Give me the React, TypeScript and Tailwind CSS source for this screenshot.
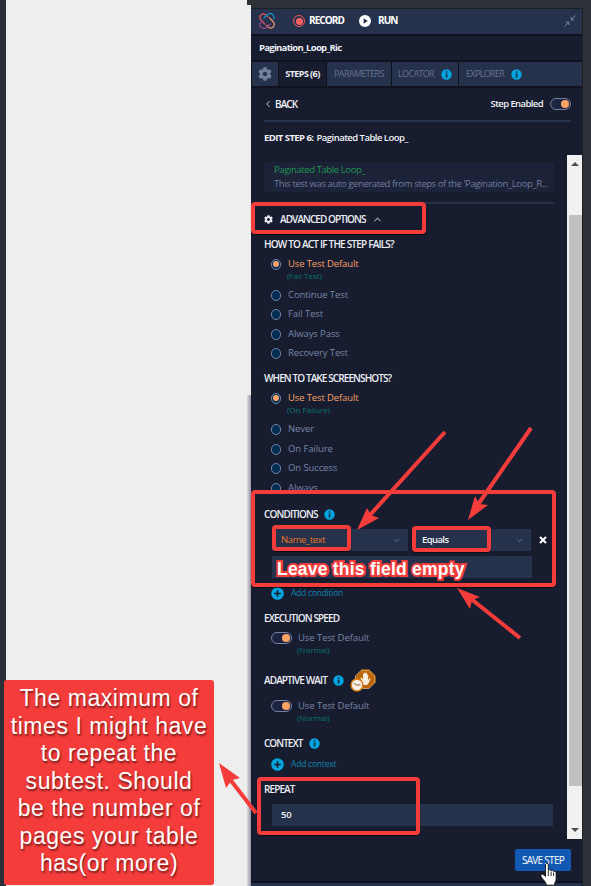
import React from "react";
import { ChevronDown, ChevronLeft, ChevronUp } from "lucide-react";
import { FaCog } from "react-icons/fa";

function Info({ className = "" }: { className?: string }) {
  return (
    <svg className={"shrink-0 " + className} width="11" height="11" viewBox="0 0 11 11">
      <circle cx="5.5" cy="5.5" r="5.2" fill="#00a5df" />
      <rect x="4.7" y="4.6" width="1.7" height="4" fill="#15314f" />
      <rect x="4.7" y="2.2" width="1.7" height="1.5" fill="#15314f" />
    </svg>
  );
}

function Plus() {
  return (
    <svg className="shrink-0" width="13" height="13" viewBox="0 0 13 13">
      <circle cx="6.5" cy="6.5" r="6.3" fill="#00a5df" />
      <path d="M6.5 3.2v6.6M3.2 6.5h6.6" stroke="#161c2e" strokeWidth="1.6" />
    </svg>
  );
}

function Heading({ children, className = "" }: { children: React.ReactNode; className?: string }) {
  return (
    <div className={"ml-[13px] flex h-[21px] items-center text-[10px] font-semibold text-[#eceef4] " + className}>
      {children}
    </div>
  );
}

function Radio({ label, on = false, className = "" }: { label: string; on?: boolean; className?: string }) {
  return (
    <div
      className={
        "ml-5 flex items-center text-[9.5px] " + (on ? "h-[18px] text-[#f7a066] " : "text-[#7885a6] ") + className
      }
    >
      <span className="mr-[7px] flex h-[11px] w-[10px] shrink-0 items-center justify-center rounded-full border border-[#6f84a8] bg-[#022c50]">
        {on && <span className="size-[6px] shrink-0 rounded-full bg-[#ffa468]" />}
      </span>
      <span className={on ? "pt-px tracking-[-0.13px]" : "tracking-[-0.1px]"}>{label}</span>
    </div>
  );
}

function Sub({ children, className = "" }: { children: React.ReactNode; className?: string }) {
  return (
    <div className={"flex h-[9px] items-center pb-[3px] text-[8px] leading-none text-[#0a7372] " + className}>
      {children}
    </div>
  );
}

function Toggle() {
  return (
    <span className="flex h-[12px] w-[21px] shrink-0 items-center justify-end rounded-full border border-[#7480a3] bg-[#1c2440] pr-px">
      <span className="size-[8px] rounded-full bg-[#ffa468]" />
    </span>
  );
}

function DefaultToggle({ className = "" }: { className?: string }) {
  return (
    <div className={className}>
      <div className="ml-5 flex h-[18px] items-center gap-[6px] text-[9.5px] text-[#7885a6]">
        <Toggle />
        <span className="tracking-[-0.07px]">Use Test Default</span>
      </div>
      <Sub className="ml-[46px]">(Normal)</Sub>
    </div>
  );
}

function Logo() {
  return (
    <svg width="16" height="16" viewBox="0 0 16 16" fill="none" strokeWidth="1.2" strokeLinecap="round">
      <path d="M5.7 11.2 1.6 6.7C-.5 3.2 2.8-.3 6.2 1.5L8.5 3.6" stroke="#ed5863" />
      <path d="M5 5 8.6 1.5c3-2.5 7.8.4 6 4.5" stroke="#1297c8" />
      <path d="M10.3 4.7 14.4 9c2.5 3.6-1.2 7.4-4.6 5.4L7.6 12.3" stroke="#f49a67" />
      <path d="M11 11 7.3 14.5c-3.2 2.5-7.8-.7-6.1-4.4L3.7 7.5" stroke="#9e3f91" />
    </svg>
  );
}

function WaitIcon() {
  return (
    <svg className="-my-1 ml-[6px] shrink-0" width="26" height="24" viewBox="0 0 26 24">
      <path d="M11 1.5h8l5.500 5.500v7L19 19.500h-8L5.500 14V7z" fill="#bd6508" stroke="#e8c58e" strokeWidth=".7" />
      <path d="M11 1h8.200L25 6.800V14" fill="none" stroke="#e58b16" strokeWidth="1" />
      <path
        d="M12.3 14.5 10.7 9.4c-.3-1 .9-1.2 1.3-.3l1 2V5.2c0-1 1.3-1 1.3 0v4V4.1c0-1 1.4-1 1.4 0v5-4.5c0-1 1.3-1 1.3 0v4.8-3.2c0-1 1.2-1 1.2 0v5l1-1.4c.8-.8 1.6 0 1.1.8l-2.2 4.2-1.1 1.3h-3.4z"
        fill="#f8ecdf"
      />
      <circle cx="7" cy="16" r="5.9" fill="#f5eee4" stroke="#d57c12" strokeWidth="1.5" />
      <path d="m3.8 14.3 3 1.8 3.7-.2" stroke="#8d613c" fill="none" strokeWidth="1" />
    </svg>
  );
}

function Header() {
  return (
    <>
      <div className="flex h-[25px] items-center bg-[#26314b] text-[10px] font-bold text-white">
        <span className="ml-[8px] mt-[-1px]"><Logo /></span>
        <span className="ml-[18px] mt-[-1px] flex size-[12px] items-center justify-center rounded-full border border-[#f15a5d]">
          <span className="size-[7px] rounded-full bg-[#ff6062]" />
        </span>
        <span className="ml-[4px] mt-[-3px] w-[34px] whitespace-nowrap tracking-[-0.95px]">RECORD</span>
        <svg className="ml-[16px] mt-[-2px]" width="12" height="12" viewBox="0 0 12 12">
          <circle cx="6" cy="6" r="6" fill="white" />
          <path d="m4.600 3.300 4.200 2.700-4.200 2.700z" fill="#26314b" />
        </svg>
        <span className="ml-[7px] mt-[-3px] tracking-[-0.95px]">RUN</span>
        <svg className="ml-auto mr-[6px] mt-[-2px]" width="12" height="12" viewBox="0 0 12 12" stroke="#7881a0" fill="none">
          <path d="M11.5.5 7 5M7.200 2v3h3M.5 11.500 5 7M1.800 7h3v3" />
        </svg>
      </div>
      <div className="mt-[2px] flex h-[24px] items-center bg-[#171d2f] pl-[8px] text-[9.5px] font-bold tracking-[-0.72px] text-[#eceef4]">
        Pagination_Loop_Ric
      </div>
      <div className="mt-[2px] flex h-[24px] gap-px pl-px text-[9px] text-[#68728f]">
        <div className="flex w-[26px] items-center justify-center bg-[#26314b]">
          <FaCog size={14} color="#75809f" />
        </div>
        <div className="flex w-[47px] items-center justify-center bg-[#171d2f] text-[9px] font-bold tracking-[-0.55px] text-[#eceef4]">
          STEPS (6)
        </div>
        <div className="flex w-[64px] items-center bg-[#26314b] pl-[7px] tracking-[-0.6px]">PARAMETERS</div>
        <div className="flex w-[66px] items-center bg-[#26314b] pl-[6px]">
          <span className="tracking-[-0.65px]">LOCATOR</span>
          <Info className="ml-auto mr-[6px]" />
        </div>
        <div className="flex flex-1 items-center bg-[#26314b] pl-[7px]">
          <span className="w-[38px] whitespace-nowrap tracking-[-0.65px]">EXPLORER</span>
          <Info className="ml-[7px]" />
        </div>
      </div>
    </>
  );
}

function Scrollbar() {
  return (
    <div className="flex w-[15px] shrink-0 flex-col bg-[#f1f1f1]">
      <div className="flex h-[60px] justify-center pt-[7px]">
        <svg width="8" height="4" viewBox="0 0 8 4"><path d="m0 4 4-4 4 4z" fill="#505050" /></svg>
      </div>
      <div className="ml-[2px] h-[571px] bg-[#c1c1c1]" />
      <div className="mt-[42px] flex justify-center">
        <svg width="8" height="4" viewBox="0 0 8 4"><path d="m0 0 4 4 4-4z" fill="#505050" /></svg>
      </div>
    </div>
  );
}

function StepOptions() {
  return (
    <div className="flex w-[316px] shrink-0 flex-col">
      <div className="ml-[13px] mt-[7px] h-[30px] w-[290px] bg-[#1c2339] pl-[10px] pt-px text-[9.5px] leading-[14px]">
        <div className="whitespace-nowrap tracking-[-0.4px] text-[#1d9550]">Paginated Table Loop_</div>
        <div className="whitespace-nowrap tracking-[-0.4px] text-[#707b9b]">
          This test was auto generated from steps of the 'Pagination_Loop_R...
        </div>
      </div>
      <div className="ml-[13px] mt-[10px] h-[2px] w-[290px] bg-[#26314b]" />
      <div className="ml-[13px] flex h-[30px] items-center text-[10px] font-semibold text-[#eceef4]">
        <FaCog size={9} />
        <span className="ml-[7px] tracking-[-0.93px]">ADVANCED OPTIONS</span>
        <ChevronUp className="ml-[6px]" size={11} />
      </div>
      <Heading className="tracking-[-0.8px]">HOW TO ACT IF THE STEP FAILS?</Heading>
      <Radio label="Use Test Default" on />
      <Sub className="ml-[36px]">(Fail Test)</Sub>
      <Radio label="Continue Test" className="mt-[3px] h-[20px]" />
      <Radio label="Fail Test" className="h-[19px]" />
      <Radio label="Always Pass" className="h-[20px]" />
      <Radio label="Recovery Test" className="h-[19px]" />
      <Heading className="mt-[5px] tracking-[-0.9px]">WHEN TO TAKE SCREENSHOTS?</Heading>
      <Radio label="Use Test Default" on />
      <Sub className="ml-[36px]">(On Failure)</Sub>
      <Radio label="Never" className="mt-[4px] h-[19px]" />
      <Radio label="On Failure" className="h-[20px]" />
      <Radio label="On Success" className="h-[19px]" />
      <Radio label="Always" className="h-[20px]" />
      <Heading className="mt-[6px] tracking-[-0.87px]">
        CONDITIONS <Info className="ml-[6px]" />
      </Heading>
      <div className="ml-[21px] mt-[4px] flex h-[22px] text-[9.5px]">
        <div className="flex w-[136px] items-center justify-between bg-[#26314b] pl-[9px] pr-[7px] tracking-[-0.4px] text-[#e77728]">
          Name_text
          <ChevronDown size={9} color="#7881a0" />
        </div>
        <div className="ml-[5px] flex w-[118px] items-center justify-between bg-[#26314b] pl-[9px] pr-[7px] font-semibold tracking-[-0.6px] text-[#f0f2f6]">
          Equals
          <ChevronDown size={9} color="#7881a0" />
        </div>
        <svg className="ml-[8px] self-center" width="8" height="8" viewBox="0 0 8 8">
          <path d="m1 1 6 6M7 1 1 7" stroke="white" strokeWidth="2" />
        </svg>
      </div>
      <div className="ml-[21px] mt-[5px] h-[22px] w-[260px] bg-[#26314b]" />
      <div className="ml-5 mt-[5px] flex h-[20px] items-center gap-[7px] text-[8.5px] tracking-[-0.25px] text-[#1183ad]">
        <Plus /> Add condition
      </div>
      <Heading className="mt-[5px] tracking-[-0.87px]">EXECUTION SPEED</Heading>
      <DefaultToggle />
      <Heading className="mt-[14px] tracking-[-0.9px]">
        ADAPTIVE WAIT <Info className="ml-[6px]" /> <WaitIcon />
      </Heading>
      <DefaultToggle className="mt-[6px]" />
      <Heading className="mt-[9px] tracking-[-0.97px]">
        CONTEXT <Info className="ml-[7px]" />
      </Heading>
      <div className="ml-5 flex h-[20px] items-center gap-[7px] text-[8.5px] tracking-[-0.22px] text-[#1183ad]">
        <Plus /> Add context
      </div>
      <Heading className="mt-[5px] tracking-[-0.9px]">REPEAT</Heading>
      <div className="ml-[21px] mt-[4px] flex h-[22px] w-[281px] items-center bg-[#26314b] pl-[9px] text-[9.5px] font-semibold tracking-[-0.3px] text-[#f0f2f6]">
        50
      </div>
    </div>
  );
}

function Box({ className }: { className: string }) {
  return <div className={"absolute rounded-[4px] border-4 border-[#f43c3b] shadow-[0_1px_1px_#0009] " + className} />;
}

function Annotations() {
  return (
    <>
      <Box className="left-[251px] top-[202px] h-[32px] w-[175px]" />
      <Box className="left-[251px] top-[490px] h-[97px] w-[305px]" />
      <Box className="left-[272px] top-[525px] h-[26px] w-[79px]" />
      <Box className="left-[412px] top-[526px] h-[26px] w-[79px]" />
      <Box className="left-[257px] top-[777px] h-[58px] w-[163px]" />
      <svg className="absolute left-0 top-0" width="591" height="886" viewBox="0 0 591 886" fill="#f43c3b">
        <g stroke="#f43c3b" strokeWidth="4">
          <path d="M445 432 370 515" />
          <path d="M531 428 477 506" />
          <path d="M520 638 470 598" />
          <path d="M256 813 229 778" />
        </g>
        <path d="m357 530 10-22 4 7 8 3z" />
        <path d="m468 520 7-24 4 8 9 1z" />
        <path d="m457 588 23 9-8 3-2 9z" />
        <path d="m219 763 21 15-8 2-6 8z" />
      </svg>
      <div className="absolute left-[277px] top-[558px] whitespace-nowrap font-['Liberation_Sans',Arial,sans-serif] text-[17.5px] font-bold leading-[22px] tracking-[0.22px] text-white [-webkit-text-stroke:4px_#f43c3b] [paint-order:stroke_fill]">
        Leave this field empty
      </div>
      <div className="absolute left-[4px] top-[680px] h-[205px] w-[210px] rounded-[3px] bg-[#f43c3b] pt-[5px] text-center font-['Liberation_Sans',Arial,sans-serif] text-[23px] leading-[27.5px] tracking-[0.55px] text-white [text-shadow:1px_2px_2px_#0008]">
        <div>The maximum of</div>
        <div>times I might have</div>
        <div>to repeat the</div>
        <div>subtest. Should</div>
        <div>be the number of</div>
        <div>pages your table</div>
        <div>has(or more)</div>
      </div>
      <svg className="absolute left-[540px] top-[863px]" width="19" height="23" viewBox="0 0 19 23">
        <path
          d="M5.500 1.500c0-1.500 2.800-1.500 2.800 0v6c.5-1 2.400-1 2.800.3.700-.8 2.200-.5 2.500.7.800-.7 2.500-.2 2.500 1.200v6.500c0 2-1.500 3-1.500 5v1H6.500c-.5-2.700-2-4.200-4-6.500C.7 13.500.5 12 1.200 11.500c1.500-1 2.700.5 4.300 2z"
          fill="white"
          stroke="#111"
          strokeWidth=".9"
        />
        <path d="M8.300 8v5M11.100 8.500V13M13.600 9.500V13" stroke="#111" strokeWidth=".9" />
      </svg>
    </>
  );
}

export default function App() {
  return (
    <div className="relative flex h-[886px] w-[591px] overflow-hidden bg-[#2d3138] font-['Open_Sans',sans-serif]">
      <div className="w-[6px] shrink-0 bg-[#2a2f38]" />
      <div className="w-[241px] shrink-0 bg-[#eeeeee]" />
      <div className="flex w-[4px] shrink-0 flex-col pt-[5px]">
        <div className="h-[390px] bg-[#eeeeee]" />
        <div className="flex-1 bg-linear-to-r from-[#dededf] to-[#9493aa]" />
      </div>
      <div className="mt-[8px] flex h-[878px] w-[332px] shrink-0 flex-col border-r border-t border-[#1b1e23] bg-[#10131f]">
        <Header />
        <div className="mt-[2px] flex h-[793px] flex-col bg-[#171d2f]">
          <div className="flex h-[32px] items-center pl-[12px] pr-[11px] text-[10px] font-semibold text-[#f0f2f6]">
            <ChevronLeft size={10} />
            <span className="ml-[2px] tracking-[-0.95px]">BACK</span>
            <span className="ml-auto mr-[7px] text-[9.5px] tracking-[-0.6px]">Step Enabled</span>
            <Toggle />
          </div>
          <div className="ml-[13px] h-[2px] w-[307px] bg-[#26314b]" />
          <div className="ml-[13px] flex h-[33px] items-center text-[9.5px] text-[#f0f2f6]">
            <b className="tracking-[-0.55px]">EDIT STEP 6:</b>
            <span className="ml-[3px] font-semibold tracking-[-0.53px]">Paginated Table Loop_</span>
          </div>
          <div className="flex h-[684px]">
            <StepOptions />
            <Scrollbar />
          </div>
          <div className="ml-[264px] mt-[10px] flex h-[22px] w-[56px] shrink-0 items-center justify-center rounded-[2px] bg-[#1259b3] text-[10px] tracking-[-0.7px] text-white">
            SAVE STEP
          </div>
        </div>
        <div className="mt-[2px] h-[3px] bg-[#26314b]" />
      </div>
      <Annotations />
    </div>
  );
}
